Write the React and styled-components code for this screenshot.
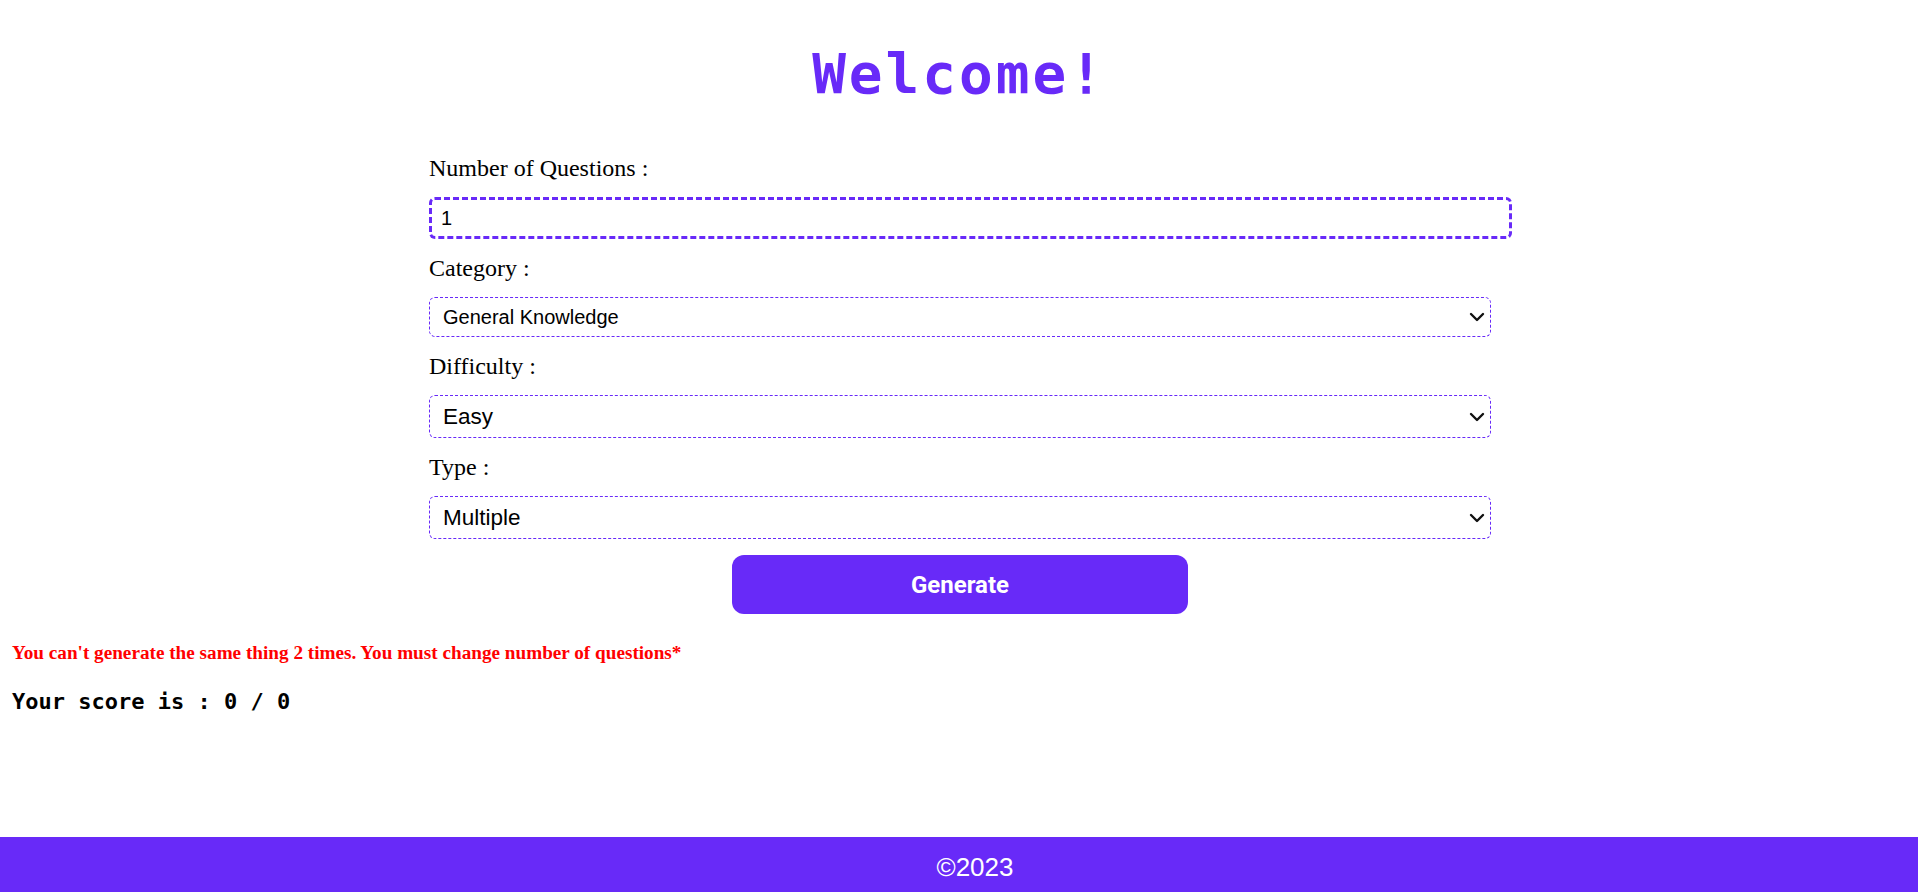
import React, { useState } from "react";
import styled, { createGlobalStyle } from "styled-components";
import { ChevronDown } from "lucide-react";

const purple = "#682af8";

const GlobalStyle = createGlobalStyle`
    html, body {
        margin: 0;
        padding: 0;
        background: #ffffff;
    }
    body {
        font-family: "Liberation Serif", "Times New Roman", serif;
    }
`;

function Dropdown({ id, value, onChange, size, children }) {
    return (
        <SelectWrap>
            <Select id={id} $size={size} value={value} onChange={onChange}>
                {children}
            </Select>
            <Arrow size={24} strokeWidth={2.4} />
        </SelectWrap>
    );
}

function App() {
    const [amount, setAmount] = useState("1");
    const [category, setCategory] = useState("9");
    const [difficulty, setDifficulty] = useState("easy");
    const [type, setType] = useState("multiple");

    return (
        <>
            <GlobalStyle />
            <Page>
                <Main>
                    <Title>Welcome!</Title>
                    <Form onSubmit={(e) => e.preventDefault()}>
                        <Label htmlFor="amount">Number of Questions :</Label>
                        <NumberInput
                            id="amount"
                            type="number"
                            value={amount}
                            onChange={(e) => setAmount(e.target.value)}
                        />
                        <Label htmlFor="category">Category :</Label>
                        <Dropdown
                            id="category"
                            size="small"
                            value={category}
                            onChange={(e) => setCategory(e.target.value)}
                        >
                            <option value="9">General Knowledge</option>
                            <option value="10">Entertainment: Books</option>
                            <option value="11">Entertainment: Film</option>
                            <option value="17">Science &amp; Nature</option>
                        </Dropdown>
                        <Label htmlFor="difficulty">Difficulty :</Label>
                        <Dropdown
                            id="difficulty"
                            value={difficulty}
                            onChange={(e) => setDifficulty(e.target.value)}
                        >
                            <option value="easy">Easy</option>
                            <option value="medium">Medium</option>
                            <option value="hard">Hard</option>
                        </Dropdown>
                        <Label htmlFor="type">Type :</Label>
                        <Dropdown
                            id="type"
                            value={type}
                            onChange={(e) => setType(e.target.value)}
                        >
                            <option value="multiple">Multiple</option>
                            <option value="boolean">True / False</option>
                        </Dropdown>
                        <GenerateButton type="submit">Generate</GenerateButton>
                    </Form>
                    <Results>
                        <Warning>You can't generate the same thing 2 times. You must change number of questions*</Warning>
                        <Score>Your score is : 0 / 0</Score>
                    </Results>
                </Main>
                <Footer>©2023</Footer>
            </Page>
        </>
    );
}

const Page = styled.div`
    min-height: 100vh;
    display: flex;
    flex-direction: column;
`;

const Main = styled.main`
    flex: 1;
    display: flex;
    flex-direction: column;
    padding-top: 46px;
`;

const Title = styled.h1`
    margin: 0 0 52px 0;
    text-align: center;
    font-family: "DejaVu Sans Mono", "Liberation Mono", monospace;
    font-size: 56px;
    line-height: 56px;
    font-weight: bold;
    letter-spacing: 3px;
    color: ${purple};
`;

const Form = styled.form`
    width: 1062px;
    margin: 0 0 0 calc(50% - 530px);
    display: flex;
    flex-direction: column;
    gap: 15px;
`;

const Label = styled.label`
    font-size: 24px;
    line-height: 28px;
    color: #000;
`;

const NumberInput = styled.input`
    box-sizing: content-box;
    width: 100%;
    height: 36px;
    padding: 0 6px 0 9px;
    border: 3px dashed ${purple};
    border-radius: 6px;
    font-family: "Liberation Sans", Arial, sans-serif;
    font-size: 20px;
    color: #000;
    outline: none;
    margin: 0;
`;

const SelectWrap = styled.div`
    position: relative;
    width: 100%;
`;

const Select = styled.select`
    appearance: none;
    -webkit-appearance: none;
    display: block;
    box-sizing: border-box;
    width: 100%;
    height: ${(p) => (p.$size === "small" ? "40px" : "43px")};
    padding: 0 32px 0 13px;
    border: 1px dashed ${purple};
    border-radius: 6px;
    background: #fff;
    font-family: "Liberation Sans", Arial, sans-serif;
    font-size: ${(p) => (p.$size === "small" ? "20px" : "22.5px")};
    color: #000;
    outline: none;
    margin: 0;
    cursor: pointer;
`;

const Arrow = styled(ChevronDown)`
    position: absolute;
    right: 2px;
    top: 50%;
    transform: translateY(-50%);
    color: #111;
    pointer-events: none;
`;

const GenerateButton = styled.button`
    align-self: center;
    width: 456px;
    height: 59px;
    margin-top: 1px;
    border: none;
    border-radius: 12px;
    background: ${purple};
    color: #fff;
    font-family: Roboto, "Liberation Sans", sans-serif;
    font-weight: 700;
    font-size: 24px;
    cursor: pointer;
`;

const Results = styled.section`
    padding: 28px 12px 0 12px;
    display: flex;
    flex-direction: column;
    gap: 25px;
`;

const Warning = styled.p`
    margin: 0;
    font-size: 19.2px;
    line-height: 22px;
    font-weight: bold;
    color: #ff0000;
`;

const Score = styled.p`
    margin: 0;
    font-family: "DejaVu Sans Mono", "Liberation Mono", monospace;
    font-weight: bold;
    font-size: 22px;
    line-height: 26px;
    color: #000;
`;

const Footer = styled.footer`
    height: 55px;
    box-sizing: border-box;
    padding: 6px 0 0 32px;
    display: flex;
    align-items: center;
    justify-content: center;
    background: ${purple};
    color: #fff;
    font-family: "Liberation Sans", Arial, sans-serif;
    font-size: 26px;
`;

export default App;
